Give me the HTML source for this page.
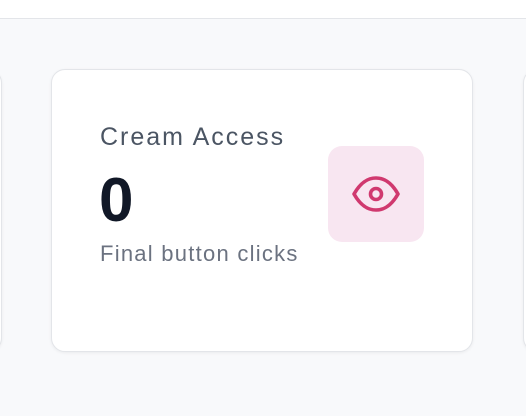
<!DOCTYPE html>
<html><head><style>
html,body{margin:0;padding:0;}
body{width:526px;height:416px;background:#f8f9fb;position:relative;overflow:hidden;font-family:"Liberation Sans",sans-serif;}
.top{position:absolute;left:0;top:0;width:526px;height:18px;background:#fff;border-bottom:1.5px solid #e3e5e9;}
.card{position:absolute;box-sizing:border-box;background:#fff;border:1.5px solid #e3e5e9;border-radius:14px;box-shadow:0 1px 3px rgba(0,0,0,0.06);}
.t1{position:absolute;left:100px;top:123px;font-size:25px;letter-spacing:2px;color:#4b5563;white-space:nowrap;}
.n{position:absolute;left:99px;top:166px;font-size:62px;font-weight:bold;color:#111827;line-height:70px;transform:scaleX(1.0);transform-origin:left;}
.t2{position:absolute;left:100px;top:241px;font-size:22px;letter-spacing:1.25px;color:#6b7280;white-space:nowrap;}
.ic{position:absolute;left:328px;top:146px;width:96px;height:96px;border-radius:14px;background:#f8e6f1;}
</style></head><body>
<div class="top"></div>
<div class="card" style="left:-420px;top:69px;width:422px;height:283px"></div>
<div class="card" style="left:51px;top:69px;width:422px;height:283px"></div>
<div class="card" style="left:523px;top:69px;width:422px;height:283px"></div>
<div class="t1">Cream Access</div>
<div class="n">0</div>
<div class="t2">Final button clicks</div>
<div class="ic">
<svg width="96" height="96" viewBox="0 0 96 96"><g fill="none" stroke="#d0396f" stroke-width="3.6" stroke-linejoin="round"><path d="M26 48 C34 34 42 32 48 32 C54 32 62 34 70 48 C62 62 54 64 48 64 C42 64 34 62 26 48 Z"/><circle cx="48" cy="48" r="5.5"/></g></svg>
</div>
</body></html>
